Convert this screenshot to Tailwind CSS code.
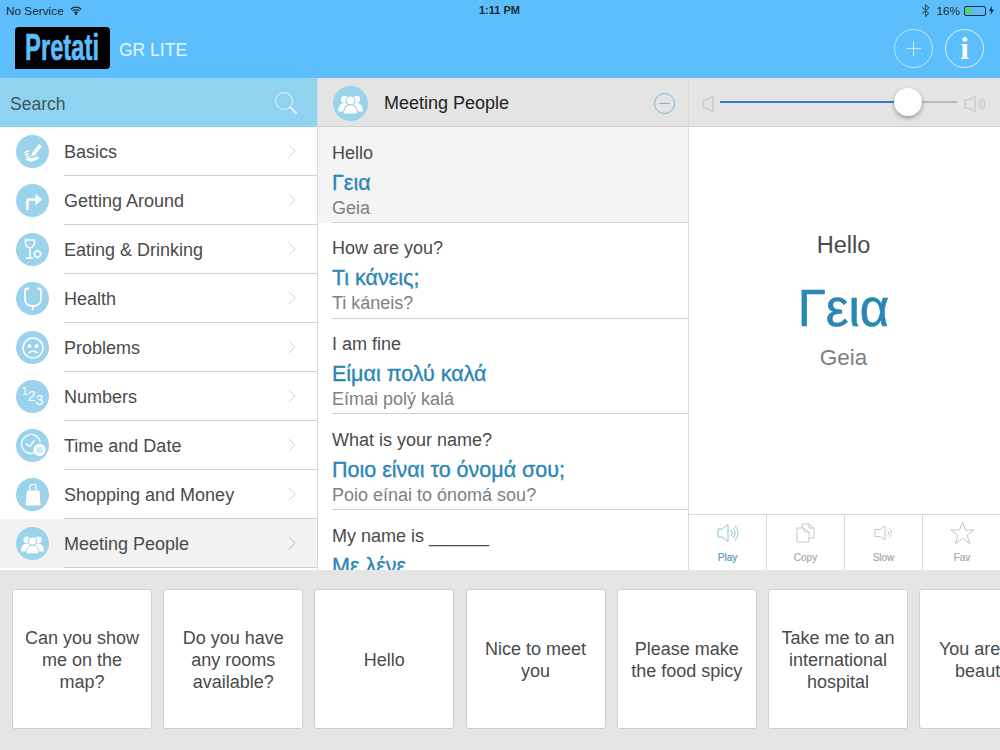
<!DOCTYPE html>
<html lang="en">
<head>
    <meta charset="UTF-8">
    <title>Pretati GR Lite</title>
    <script src="https://cdn.jsdelivr.net/npm/@tailwindcss/browser@4"></script>
</head>
<body class="w-[1000px] h-[750px] overflow-hidden bg-[#e5e5e5] font-['Liberation_Sans',sans-serif] text-[#333]">
    <svg class="hidden">
        <symbol id="people" viewBox="0 0 28 24">
            <circle cx="7" cy="7" r="4" fill="#fff"/><circle cx="21" cy="7" r="4" fill="#fff"/>
            <path d="M0 21c0-6 2.500-9.500 7-9.500s7 3.500 7 9.500zM14 21c0-6 2.500-9.500 7-9.500s7 3.500 7 9.500z" fill="#fff"/>
            <circle cx="14" cy="8.500" r="5" fill="#fff" stroke="#9bd2ec" stroke-width="1.200"/>
            <path d="M6 24c0-7 3-10.500 8-10.500s8 3.500 8 10.500z" fill="#fff" stroke="#9bd2ec" stroke-width="1.200"/>
        </symbol>
    </svg>

    <!-- Status bar + header -->
    <header class="h-[78px] bg-[#5cbffb]">
        <div class="h-[20px] px-[6px] pt-[1px] flex items-center justify-between text-[11.8px] leading-[14px] text-[#1c2b36] relative">
            <div class="flex items-center gap-[6px]">
                <span>No Service</span>
                <svg width="12" height="9" viewBox="0 0 12 9" fill="none" stroke="#1c2b36" stroke-width="1.300"><path d="M.8 3.200a7.400 7.400 0 0 1 10.400 0M2.600 5a4.800 4.800 0 0 1 6.800 0M4.400 6.700a2.300 2.300 0 0 1 3.200 0"/><circle cx="6" cy="8" r=".5"/></svg>
            </div>
            <span class="absolute left-[479px] top-[3px] font-bold text-[11px]">1:11 PM</span>
            <div class="flex items-center gap-[3px]">
                <svg width="9" height="13" viewBox="0 0 8 12" fill="none" stroke="#33566e" stroke-width="1"><path d="M1 3.200l6 5.300-3 2.800V.8l3 2.700-6 5.300"/></svg>
                <span class="ml-[3px]">16%</span>
                <div class="w-[22px] h-[10px] border border-[#1c2b36] rounded-[2px] p-[1px] ml-[1px]"><div class="w-[5px] h-full bg-[#4cd964]"></div></div>
                <svg width="5" height="9" viewBox="0 0 5 9"><path d="M3 0L0 5h2L1.500 9 5 3.800H3z" fill="#1c2b36"/></svg>
            </div>
        </div>
        <div class="h-[58px] flex items-start">
            <div class="ml-[15px] mt-[7px] w-[95px] h-[42px] bg-black rounded-[4px] rounded-bl-none flex items-center justify-center overflow-hidden">
                <span class="font-bold text-[36px] leading-none text-[#5cbffb] scale-x-[0.66] [-webkit-text-stroke:0.6px_#5cbffb] whitespace-nowrap">Pretati</span>
            </div>
            <span class="ml-[9px] mt-[20px] text-[17.5px] leading-[20px] text-white/85">GR LITE</span>
            <div class="ml-auto mr-[16px] mt-[9px] flex gap-[12px]">
                <div class="w-[39px] h-[39px] rounded-full border border-white/60 flex items-center justify-center">
                    <svg width="17" height="17" viewBox="0 0 17 17" stroke="#fff" stroke-opacity=".65" stroke-width="1"><path d="M8.500 1v15M1 8.500h15"/></svg>
                </div>
                <div class="w-[39px] h-[39px] rounded-full border border-white/80 flex items-center justify-center font-['Liberation_Serif',serif] font-bold text-[31px] leading-none text-white">i</div>
            </div>
        </div>
    </header>

    <main class="h-[492px] flex bg-white">
        <!-- Categories -->
        <aside class="w-[318px] shrink-0 border-r border-[#d8d8d8] flex flex-col overflow-hidden">
            <div class="h-[49px] shrink-0 bg-[#90d3f0] pl-[10px] pr-[19px] flex items-center justify-between text-[17.5px] text-[#3d5560]">
                <span class="mt-[3px]">Search</span>
                <svg width="24" height="24" viewBox="0 0 24 24" fill="none" stroke="#fff" stroke-opacity=".75"><circle cx="10" cy="10" r="8.500"/><path d="M16 16l6.500 6.500" stroke-width="2"/></svg>
            </div>
            <ul class="text-[18px] text-[#4a4a4a]">
                <li class="h-[49px] flex items-center pl-[16px]">
                    <span class="w-[33px] h-[33px] shrink-0 rounded-full bg-[#9bd2ec] flex items-center justify-center">
                        <svg width="24" height="24" viewBox="0 0 24 24"><path d="M11 13l7-9 3 2.200-7 9-4 1.500z" fill="#fff"/><path d="M3 13l5-2.500M4 15.500l4-2M5 18l3.500-1.800" stroke="#fff" stroke-width="1.400"/><path d="M4 19.500l6 2.500 8-3-1.500-3-4.500 2-3-.5z" fill="#fff"/></svg>
                    </span>
                    <div class="ml-[15px] flex-1 h-full flex items-center justify-between pr-[21px] border-b border-[#cfcfcf]"><span class="pt-[2px]">Basics</span><svg width="8" height="14" viewBox="0 0 8 14" fill="none" stroke="#b5dcee"><path d="M1 1l6 6-6 6"/></svg></div>
                </li>
                <li class="h-[49px] flex items-center pl-[16px]">
                    <span class="w-[33px] h-[33px] shrink-0 rounded-full bg-[#9bd2ec] flex items-center justify-center">
                        <svg width="22" height="22" viewBox="0 0 22 22" fill="none"><path d="M5.500 20v-8.500a2 2 0 0 1 2-2H14" stroke="#fff" stroke-width="2.600"/><path d="M13.500 4l7 5.500-7 5.500z" fill="#fff"/></svg>
                    </span>
                    <div class="ml-[15px] flex-1 h-full flex items-center justify-between pr-[21px] border-b border-[#cfcfcf]"><span class="pt-[2px]">Getting Around</span><svg width="8" height="14" viewBox="0 0 8 14" fill="none" stroke="#b5dcee"><path d="M1 1l6 6-6 6"/></svg></div>
                </li>
                <li class="h-[49px] flex items-center pl-[16px]">
                    <span class="w-[33px] h-[33px] shrink-0 rounded-full bg-[#9bd2ec] flex items-center justify-center">
                        <svg width="22" height="24" viewBox="0 0 22 24" fill="none" stroke="#fff" stroke-width="1.500"><path d="M3.500 2h9c.5 4-1 8-4.500 8S3 6 3.500 2zM8 10v9M4 20h7"/><circle cx="15.500" cy="16" r="3"/><path d="M15.500 11.500v1.500M15.500 19v1.500M11 16h1.500M18.500 16H20"/></svg>
                    </span>
                    <div class="ml-[15px] flex-1 h-full flex items-center justify-between pr-[21px] border-b border-[#cfcfcf]"><span class="pt-[2px]">Eating &amp; Drinking</span><svg width="8" height="14" viewBox="0 0 8 14" fill="none" stroke="#b5dcee"><path d="M1 1l6 6-6 6"/></svg></div>
                </li>
                <li class="h-[49px] flex items-center pl-[16px]">
                    <span class="w-[33px] h-[33px] shrink-0 rounded-full bg-[#9bd2ec] flex items-center justify-center">
                        <svg width="22" height="28" viewBox="0 0 22 28" fill="none" stroke="#fff" stroke-width="1.800"><path d="M7 3.500H5.500C4 3.500 3 4.500 3 6v8c0 4 3 7 8 7s8-3 8-7V6c0-1.500-1-2.500-2.500-2.500H15M11 21v4"/></svg>
                    </span>
                    <div class="ml-[15px] flex-1 h-full flex items-center justify-between pr-[21px] border-b border-[#cfcfcf]"><span class="pt-[2px]">Health</span><svg width="8" height="14" viewBox="0 0 8 14" fill="none" stroke="#b5dcee"><path d="M1 1l6 6-6 6"/></svg></div>
                </li>
                <li class="h-[49px] flex items-center pl-[16px]">
                    <span class="w-[33px] h-[33px] shrink-0 rounded-full bg-[#9bd2ec] flex items-center justify-center">
                        <svg width="24" height="24" viewBox="0 0 24 24" fill="none" stroke="#fff" stroke-width="1.500"><circle cx="12" cy="12" r="10"/><path d="M7.500 17c1.500-2.500 7.500-2.500 9 0"/><circle cx="8.500" cy="10" r="1.200" fill="#fff"/><circle cx="15.500" cy="10" r="1.200" fill="#fff"/></svg>
                    </span>
                    <div class="ml-[15px] flex-1 h-full flex items-center justify-between pr-[21px] border-b border-[#cfcfcf]"><span class="pt-[2px]">Problems</span><svg width="8" height="14" viewBox="0 0 8 14" fill="none" stroke="#b5dcee"><path d="M1 1l6 6-6 6"/></svg></div>
                </li>
                <li class="h-[49px] flex items-center pl-[16px]">
                    <span class="w-[33px] h-[33px] shrink-0 rounded-full bg-[#9bd2ec] flex items-start justify-center pt-[6px] text-white leading-none">
                        <span class="text-[11px]">1</span><span class="text-[14px] mt-[3px]">2</span><span class="text-[14px] mt-[7px]">3</span>
                    </span>
                    <div class="ml-[15px] flex-1 h-full flex items-center justify-between pr-[21px] border-b border-[#cfcfcf]"><span class="pt-[2px]">Numbers</span><svg width="8" height="14" viewBox="0 0 8 14" fill="none" stroke="#b5dcee"><path d="M1 1l6 6-6 6"/></svg></div>
                </li>
                <li class="h-[49px] flex items-center pl-[16px]">
                    <span class="w-[33px] h-[33px] shrink-0 rounded-full bg-[#9bd2ec] flex items-center justify-center">
                        <svg width="28" height="26" viewBox="0 0 28 26" fill="none" stroke="#fff" stroke-width="1.300"><path d="M15 20A9.500 9.500 0 1 1 21.300 9"/><path d="M7 10.500l3.500 3 5-6"/><circle cx="20.500" cy="17" r="5.500" fill="#fff"/><path d="M17.500 15h6M17.500 17h6M17.500 19h6" stroke="#9bd2ec" stroke-width="1"/></svg>
                    </span>
                    <div class="ml-[15px] flex-1 h-full flex items-center justify-between pr-[21px] border-b border-[#cfcfcf]"><span class="pt-[2px]">Time and Date</span><svg width="8" height="14" viewBox="0 0 8 14" fill="none" stroke="#b5dcee"><path d="M1 1l6 6-6 6"/></svg></div>
                </li>
                <li class="h-[49px] flex items-center pl-[16px]">
                    <span class="w-[33px] h-[33px] shrink-0 rounded-full bg-[#9bd2ec] flex items-center justify-center">
                        <svg width="16" height="22" viewBox="0 0 16 22" fill="#fff"><path d="M2 6.500h12.500l1 15H.5z"/><path d="M5 6.500V3a3 3 0 0 1 6 0v3.500" fill="none" stroke="#fff" stroke-width="1.200"/></svg>
                    </span>
                    <div class="ml-[15px] flex-1 h-full flex items-center justify-between pr-[21px] border-b border-[#cfcfcf]"><span class="pt-[2px]">Shopping and Money</span><svg width="8" height="14" viewBox="0 0 8 14" fill="none" stroke="#b5dcee"><path d="M1 1l6 6-6 6"/></svg></div>
                </li>
                <li class="h-[49px] flex items-center pl-[16px] bg-[#f2f2f2]">
                    <span class="w-[33px] h-[33px] shrink-0 rounded-full bg-[#9bd2ec] flex items-center justify-center">
                        <svg width="23" height="20"><use href="#people"/></svg>
                    </span>
                    <div class="ml-[15px] flex-1 h-full flex items-center justify-between pr-[21px] border-b border-[#cfcfcf]"><span class="pt-[2px]">Meeting People</span><svg width="8" height="14" viewBox="0 0 8 14" fill="none" stroke="#8ccbe9"><path d="M1 1l6 6-6 6"/></svg></div>
                </li>
            </ul>
        </aside>

        <!-- Phrases -->
        <section class="w-[371px] shrink-0 border-r border-[#d8d8d8] flex flex-col overflow-hidden">
            <div class="h-[49px] shrink-0 bg-[#e4e4e4] border-b border-[#cfcfcf] pt-[2px] pl-[15px] pr-[13px] flex items-center">
                <span class="w-[35px] h-[35px] rounded-full bg-[#9bd2ec] flex items-center justify-center">
                    <svg width="25" height="21"><use href="#people"/></svg>
                </span>
                <span class="ml-[16px] text-[18px] text-[#222]">Meeting People</span>
                <span class="ml-auto w-[21px] h-[21px] rounded-full border border-[#7fb4d2] flex items-center justify-center"><span class="w-[11px] h-px bg-[#7fb4d2]"></span></span>
            </div>
            <ul>
                <li class="h-[95.75px] bg-[#f4f4f4] pl-[14px]">
                    <div class="h-full pt-[15.5px] border-b border-[#cfcfcf]">
                        <p class="text-[18px] leading-[21px] text-[#4a4a4a]">Hello</p>
                        <p class="mt-[7px] text-[21.5px] leading-[25px] text-[#2b86b5] [-webkit-text-stroke:0.35px_#2b86b5]">Γεια</p>
                        <p class="mt-[2px] text-[18px] leading-[21px] text-[#808080]">Geia</p>
                    </div>
                </li>
                <li class="h-[95.75px] pl-[14px]">
                    <div class="h-full pt-[15.5px] border-b border-[#cfcfcf]">
                        <p class="text-[18px] leading-[21px] text-[#4a4a4a]">How are you?</p>
                        <p class="mt-[7px] text-[21.5px] leading-[25px] text-[#2b86b5] [-webkit-text-stroke:0.35px_#2b86b5]">Τι κάνεις;</p>
                        <p class="mt-[2px] text-[18px] leading-[21px] text-[#808080]">Ti káneis?</p>
                    </div>
                </li>
                <li class="h-[95.75px] pl-[14px]">
                    <div class="h-full pt-[15.5px] border-b border-[#cfcfcf]">
                        <p class="text-[18px] leading-[21px] text-[#4a4a4a]">I am fine</p>
                        <p class="mt-[7px] text-[21.5px] leading-[25px] text-[#2b86b5] [-webkit-text-stroke:0.35px_#2b86b5]">Είμαι πολύ καλά</p>
                        <p class="mt-[2px] text-[18px] leading-[21px] text-[#808080]">Eímai polý kalá</p>
                    </div>
                </li>
                <li class="h-[95.75px] pl-[14px]">
                    <div class="h-full pt-[15.5px] border-b border-[#cfcfcf]">
                        <p class="text-[18px] leading-[21px] text-[#4a4a4a]">What is your name?</p>
                        <p class="mt-[7px] text-[21.5px] leading-[25px] text-[#2b86b5] [-webkit-text-stroke:0.35px_#2b86b5]">Ποιο είναι το όνομά σου;</p>
                        <p class="mt-[2px] text-[18px] leading-[21px] text-[#808080]">Poio eínai to ónomá sou?</p>
                    </div>
                </li>
                <li class="h-[60px] pl-[14px]">
                    <div class="h-full pt-[15.5px]">
                        <p class="text-[18px] leading-[21px] text-[#4a4a4a]">My name is ______</p>
                        <p class="mt-[7px] text-[21.5px] leading-[25px] text-[#2b86b5] [-webkit-text-stroke:0.35px_#2b86b5]">Με λένε</p>
                    </div>
                </li>
            </ul>
        </section>

        <!-- Detail -->
        <section class="flex-1 flex flex-col">
            <div class="h-[49px] shrink-0 bg-[#e4e4e4] border-b border-[#cfcfcf] pl-[13px] pr-[15px] flex items-center">
                <svg class="mt-[3px]" width="12" height="18" viewBox="0 0 12 18" fill="none" stroke="#c2c2c2"><path d="M11 1v16L5 13H1V5h4z"/></svg>
                <div class="relative ml-[6px] flex-1 h-[2px] bg-[#b9b9b9]">
                    <div class="h-full w-[188px] bg-[#2f7fd6]"></div>
                    <div class="absolute left-[174px] -top-[13px] w-[28px] h-[28px] rounded-full bg-white shadow-[0_2px_4px_rgba(0,0,0,0.35)]"></div>
                </div>
                <svg class="ml-[7px] mt-[3px]" width="22" height="18" viewBox="0 0 22 18" fill="none" stroke="#c2c2c2"><path d="M11 1v16L5 13H1V5h4zM14 6a4 4 0 0 1 0 6M16 4a7 7 0 0 1 0 10M18 2.500a9.500 9.500 0 0 1 0 13"/></svg>
            </div>
            <div class="flex-1 bg-white flex flex-col items-center pt-[103px] pr-[3px]">
                <p class="text-[23.5px] leading-[30px] text-[#4a4a4a]">Hello</p>
                <p class="mt-[18px] text-[51px] leading-[62px] text-[#2b86b5] [-webkit-text-stroke:0.6px_#2b86b5]">Γεια</p>
                <p class="mt-[3px] text-[22.5px] leading-[30px] text-[#808080]">Geia</p>
            </div>
            <div class="h-[56px] shrink-0 border-t border-[#d8d8d8] flex text-[10px] text-[#a8a8a8] [-webkit-text-stroke:0.2px_#a8a8a8]">
                <div class="w-[78px] border-r border-[#d8d8d8] flex flex-col items-center pt-[8px] text-[#4f9bc4] [-webkit-text-stroke:0.2px_#4f9bc4]">
                    <svg width="22" height="20" viewBox="0 0 22 20" fill="none" stroke="#8fc0da"><path d="M11 1.500v17L5 14H1V6h4zM14 7a4 4 0 0 1 0 6M16 5a7 7 0 0 1 0 10M18 3a9.500 9.500 0 0 1 0 14"/></svg>
                    <span class="mt-[9px] leading-[12px]">Play</span>
                </div>
                <div class="w-[78px] border-r border-[#d8d8d8] flex flex-col items-center pt-[8px]">
                    <svg width="20" height="20" viewBox="0 0 20 20" fill="none" stroke="#c6c6c6"><path d="M6 5V1h7l5 4v10h-5"/><path d="M1 5h7l5 4v10H1zM8 5v4h5M13 1v4h5"/></svg>
                    <span class="mt-[9px] leading-[12px]">Copy</span>
                </div>
                <div class="w-[78px] border-r border-[#d8d8d8] flex flex-col items-center pt-[8px]">
                    <svg width="19" height="20" viewBox="0 0 19 20" fill="none" stroke="#c6c6c6"><path d="M11 3v14L6 13.500H1v-7h5zM13.500 7.500a3.500 3.500 0 0 1 0 5M15.500 5.500a6.500 6.500 0 0 1 0 9"/></svg>
                    <span class="mt-[9px] leading-[12px]">Slow</span>
                </div>
                <div class="w-[78px] flex flex-col items-center pt-[6px]">
                    <svg width="25" height="24" viewBox="0 0 25 24" fill="none" stroke="#c6c6c6"><path d="M12.500 1l3 8h8.500l-6.800 5.200 2.500 8.300-7.200-5-7.200 5 2.500-8.300L1 9h8.500z"/></svg>
                    <span class="mt-[7px] leading-[12px]">Fav</span>
                </div>
            </div>
        </section>
    </main>

    <!-- Favourite phrase cards -->
    <footer class="h-[180px] pt-[19px] pl-[12px] flex gap-[11.2px] overflow-hidden">
        <div class="w-[140px] h-[140px] shrink-0 bg-white border border-[#cfcfcf] rounded-[3px] flex items-center justify-center text-center text-[18px] leading-[22px] text-[#4a4a4a] px-[8px] pt-[1px]">Can you show me on the map?</div>
        <div class="w-[140px] h-[140px] shrink-0 bg-white border border-[#cfcfcf] rounded-[3px] flex items-center justify-center text-center text-[18px] leading-[22px] text-[#4a4a4a] px-[8px] pt-[1px]">Do you have any rooms available?</div>
        <div class="w-[140px] h-[140px] shrink-0 bg-white border border-[#cfcfcf] rounded-[3px] flex items-center justify-center text-center text-[18px] leading-[22px] text-[#4a4a4a] px-[8px] pt-[1px]">Hello</div>
        <div class="w-[140px] h-[140px] shrink-0 bg-white border border-[#cfcfcf] rounded-[3px] flex items-center justify-center text-center text-[18px] leading-[22px] text-[#4a4a4a] px-[8px] pt-[1px]">Nice to meet you</div>
        <div class="w-[140px] h-[140px] shrink-0 bg-white border border-[#cfcfcf] rounded-[3px] flex items-center justify-center text-center text-[18px] leading-[22px] text-[#4a4a4a] px-[8px] pt-[1px]">Please make the food spicy</div>
        <div class="w-[140px] h-[140px] shrink-0 bg-white border border-[#cfcfcf] rounded-[3px] flex items-center justify-center text-center text-[18px] leading-[22px] text-[#4a4a4a] px-[8px] pt-[1px]">Take me to an international hospital</div>
        <div class="w-[140px] h-[140px] shrink-0 bg-white border border-[#cfcfcf] rounded-[3px] flex items-center justify-center text-center text-[18px] leading-[22px] text-[#4a4a4a] px-[8px] pt-[1px]">You are very beautiful</div>
    </footer>
</body>
</html>
